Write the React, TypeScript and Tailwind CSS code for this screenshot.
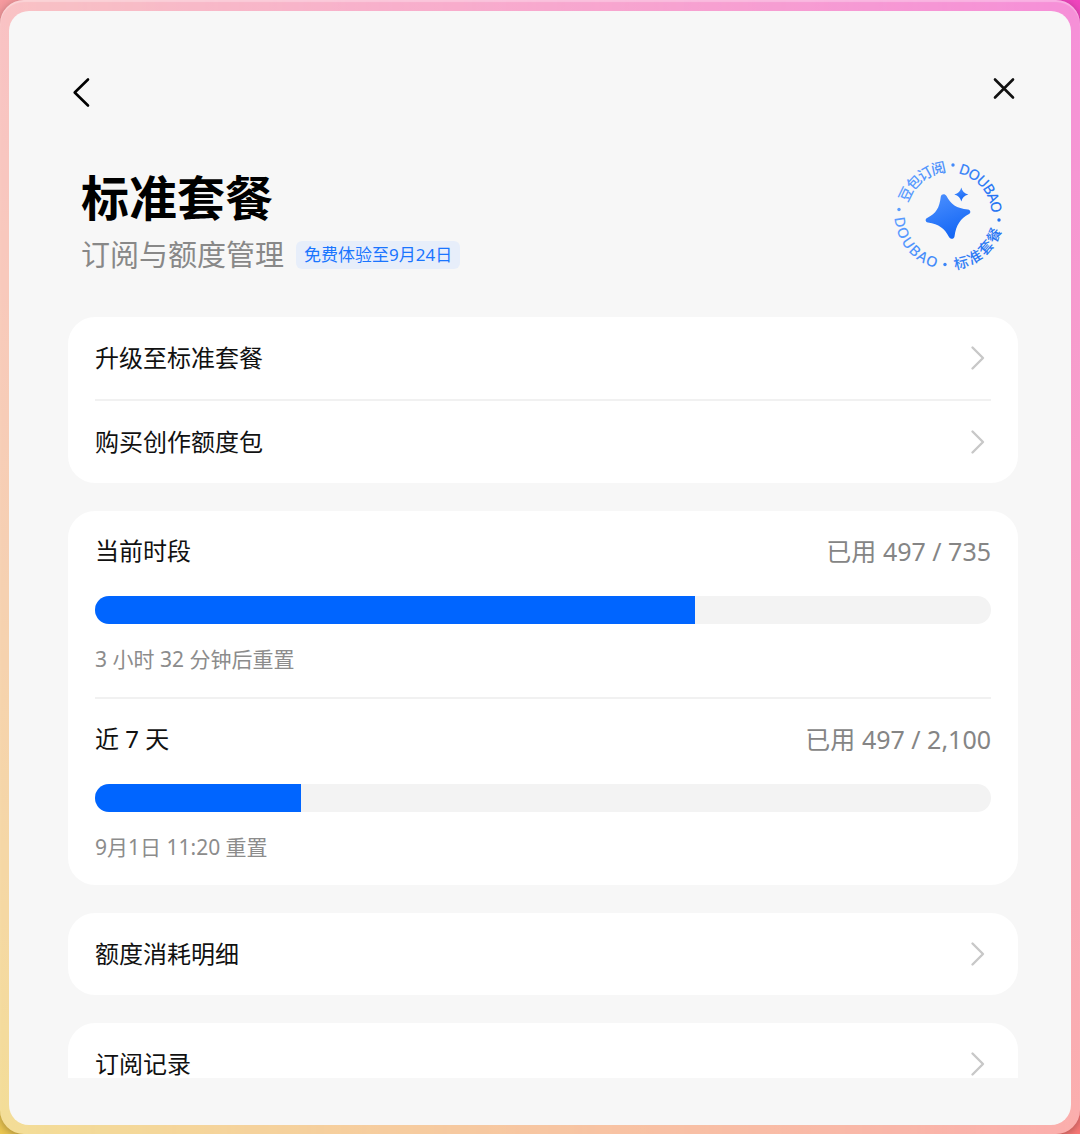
import React from 'react';

interface MenuRowProps {
  label: string;
}

interface UsageBlockProps {
  id: string;
  title: string;
  used: number;
  total: number;
  resetText: string;
}

const usage: UsageBlockProps[] = [
  { id: 'current', title: '当前时段', used: 497, total: 735, resetText: '3 小时 32 分钟后重置' },
  { id: 'week', title: '近 7 天', used: 497, total: 2100, resetText: '9月1日 11:20 重置' },
];

const ChevronIcon = () => (
  <svg className="h-7 w-7 shrink-0" viewBox="0 0 28 28" fill="none" stroke="#c8c8c8" strokeWidth="2.4" strokeLinecap="round" strokeLinejoin="round" aria-hidden="true">
    <path d="M9.5 3.5 20 14 9.5 24.5" />
  </svg>
);

const PlanSeal = () => (
  <svg className="h-[120px] w-[120px] shrink-0 overflow-visible" viewBox="0 0 120 120" aria-hidden="true">
    <defs>
      <linearGradient id="starFill" x1="0" y1="0" x2="0.4" y2="1">
        <stop offset="0" stopColor="#4f92ff" />
        <stop offset="1" stopColor="#1668f5" />
      </linearGradient>
      <linearGradient id="ringFill" gradientUnits="userSpaceOnUse" x1="10" y1="50" x2="110" y2="70">
        <stop offset="0" stopColor="#5c9dff" />
        <stop offset="1" stopColor="#2272f2" />
      </linearGradient>
      {/* Upper half reads clockwise, lower half counter-clockwise */}
      <path id="ringUpper" d="M11.5 60a48.5 48.5 0 1 1 97 0a48.5 48.5 0 1 1 -97 0" />
      <path id="ringLower" d="M11.5 60a48.5 48.5 0 1 0 97 0a48.5 48.5 0 1 0 -97 0" />
    </defs>
    <g fill="url(#ringFill)" fontSize="14.5" fontWeight="500" textAnchor="middle" dominantBaseline="central">
      <text><textPath href="#ringUpper" startOffset="14.3%">豆包订阅</textPath></text>
      <text><textPath href="#ringUpper" startOffset="38.9%">DOUBAO</textPath></text>
      <text><textPath href="#ringLower" startOffset="36.1%">标准套餐</textPath></text>
      <text><textPath href="#ringLower" startOffset="10.9%">DOUBAO</textPath></text>
      <circle cx="64" cy="10" r="1.7" />
      <circle cx="110" cy="65" r="1.7" />
      <circle cx="56" cy="109.5" r="1.7" />
      <circle cx="10" cy="54.5" r="1.7" />
    </g>
    <g fill="url(#starFill)">
      <path d="M51.8 41.5C52.5 38.7 56 38.5 57.5 41C61.5 49 67.5 53.5 79 54.5C81.8 55 82 58 80 59C71.5 63.5 67 70 65.5 81.5C65 84.5 61.3 84.5 60 82C55.5 73.5 50 69 39 67.5C36 67 36 63.8 38.5 62.8C47 58.5 50.5 53 51.8 41.5z" />
      <path d="M72.3 32.5c.9 3.6 3 5.8 7 7c-4 1.2-6.1 3.4-7 7c-.9-3.6-3-5.8-7-7c4-1.2 6.1-3.4 7-7z" />
    </g>
  </svg>
);

const MenuRow: React.FC<MenuRowProps> = ({ label }) => (
  <div>
    <button type="button" className="flex h-[82px] w-full items-center justify-between text-left">
      <span className="text-2xl text-[#111]">{label}</span>
      <ChevronIcon />
    </button>
  </div>
);

const UsageBlock: React.FC<UsageBlockProps> = ({ id, title, used, total, resetText }) => (
  <div className="pt-6 pb-[23px]">
    <div className="flex items-center justify-between">
      <h2 id={id} className="text-2xl leading-8 text-[#111]">{title}</h2>
      <span className="text-[25px] leading-8 text-[#858585]">
        已用 {used.toLocaleString('en-US')} / {total.toLocaleString('en-US')}
      </span>
    </div>
    <div
      role="progressbar"
      aria-labelledby={id}
      aria-valuenow={used}
      aria-valuemax={total}
      className="mt-[29px] h-7 overflow-hidden rounded-full bg-[#f3f3f3]"
    >
      <div className="h-full bg-[#0065ff]" style={{ width: `${Math.floor((used / total) * 100)}%` }} />
    </div>
    <p className="mt-5 text-[21px] leading-[30px] text-[#8c8c8c]">{resetText}</p>
  </div>
);

const Card: React.FC<{ children: React.ReactNode }> = ({ children }) => (
  <section className="shrink-0 divide-y-2 divide-[#f1f1f1] rounded-[27px] bg-white px-[27px]">{children}</section>
);

export default function App() {
  return (
    <div className="relative isolate h-screen overflow-hidden bg-linear-to-b from-[#f59a9e] to-[#ecc852] font-['Noto_Sans','Noto_Sans_CJK_SC',sans-serif]">
      {/* Magenta side of the backdrop, fading out to the left */}
      <div className="absolute inset-0 -z-10 bg-linear-to-b from-[#f044be] to-[#f87876] [mask-image:linear-gradient(to_right,transparent,black)]" />
      <div className="h-full rounded-3xl bg-white/40 px-[9px] pt-[11px] pb-[9px] shadow-[0_2px_8px_rgba(0,0,0,0.3),inset_0_2px_1px_rgba(255,255,255,0.3)]">
        <main className="flex h-full flex-col rounded-[20px] bg-[#f7f7f7] pr-[53px] pb-[47px] pl-[59px]">
          <div className="flex shrink-0 items-start justify-between pt-[62px]">
            <button type="button" aria-label="返回" className="mt-1">
              <svg className="h-8 w-8" viewBox="0 0 32 32" fill="none" stroke="#000" strokeWidth="2.6" strokeLinecap="round" strokeLinejoin="round">
                <path d="M20 2.5 6.7 15.5 20 28.5" />
              </svg>
            </button>
            <button type="button" aria-label="关闭">
              <svg className="h-8 w-8" viewBox="0 0 32 32" fill="none" stroke="#111" strokeWidth="2.6" strokeLinecap="round">
                <path d="M9 6.5 27 24.5M27 6.5 9 24.5" />
              </svg>
            </button>
          </div>

          <header className="mt-[46px] flex shrink-0 items-start justify-between pr-[9px] pl-[13px]">
            <div className="pt-[13px]">
              <h1 className="text-5xl leading-[60px] font-bold text-black">标准套餐</h1>
              <div className="flex items-center gap-3">
                <p className="text-[29px] leading-[54px] text-[#888]">订阅与额度管理</p>
                <span className="rounded-md bg-[#e7eefa] px-2 text-[17px] leading-7 text-[#1a75ff]">免费体验至9月24日</span>
              </div>
            </div>
            <PlanSeal />
          </header>

          <div className="mt-[35px] flex min-h-0 flex-1 flex-col gap-7 overflow-y-auto [scrollbar-width:none]">
            <Card>
              <MenuRow label="升级至标准套餐" />
              <MenuRow label="购买创作额度包" />
            </Card>
            <Card>
              {usage.map((item) => (
                <UsageBlock key={item.id} {...item} />
              ))}
            </Card>
            <Card>
              <MenuRow label="额度消耗明细" />
            </Card>
            <Card>
              <MenuRow label="订阅记录" />
            </Card>
          </div>
        </main>
      </div>
    </div>
  );
}
